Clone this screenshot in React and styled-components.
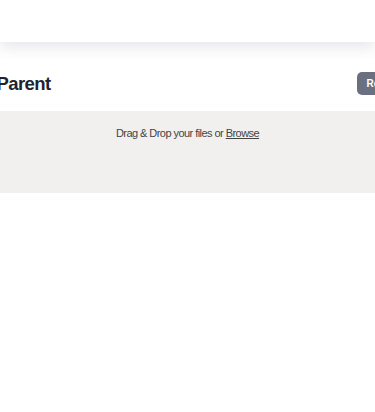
import React from "react";
import styled, { createGlobalStyle } from "styled-components";

const GlobalStyle = createGlobalStyle`
  html, body {
    margin: 0;
    padding: 0;
    background: #ffffff;
    overflow: hidden;
    font-family: "Liberation Sans", Arial, sans-serif;
  }
`;

const Header = styled.header`
  height: 42px;
  background: #ffffff;
  box-shadow: 0 6px 14px rgba(60, 64, 90, 0.12);
  position: relative;
  z-index: 1;
`;

const Main = styled.main`
  padding-top: 18px;
`;

const TitleBar = styled.div`
  display: flex;
  justify-content: center;
  overflow: hidden;
`;

const TitleRow = styled.div`
  flex-shrink: 0;
  width: 470px;
  display: flex;
  align-items: center;
  justify-content: space-between;
  padding: 12px 0 16px;
  box-sizing: border-box;
`;

const Title = styled.h1`
  margin: 0 0 0 44px;
  font-size: 18.5px;
  line-height: 23px;
  font-weight: 700;
  letter-spacing: -0.6px;
  color: #1f2330;
`;

const Button = styled.button`
  height: 23px;
  padding: 0 10px;
  margin-right: 7px;
  border: none;
  border-radius: 5px;
  background: #6b7081;
  color: #ffffff;
  font-family: "Liberation Sans", Arial, sans-serif;
  font-size: 10px;
  font-weight: 700;
  cursor: pointer;
`;

const DropZone = styled.div`
  height: 82px;
  background: #f1f0ef;
  box-sizing: border-box;
  padding-top: 15px;
  text-align: center;
  font-size: 11px;
  letter-spacing: -0.55px;
  line-height: 15px;
  color: #444444;
`;

const Browse = styled.span`
  text-decoration: underline;
  cursor: pointer;
`;

export default function App() {
  return (
    <>
      <GlobalStyle />
      <Header />
      <Main>
        <TitleBar>
          <TitleRow>
            <Title>Parent</Title>
            <Button>Remove</Button>
          </TitleRow>
        </TitleBar>
        <DropZone>
          Drag &amp; Drop your files or <Browse>Browse</Browse>
        </DropZone>
      </Main>
    </>
  );
}
